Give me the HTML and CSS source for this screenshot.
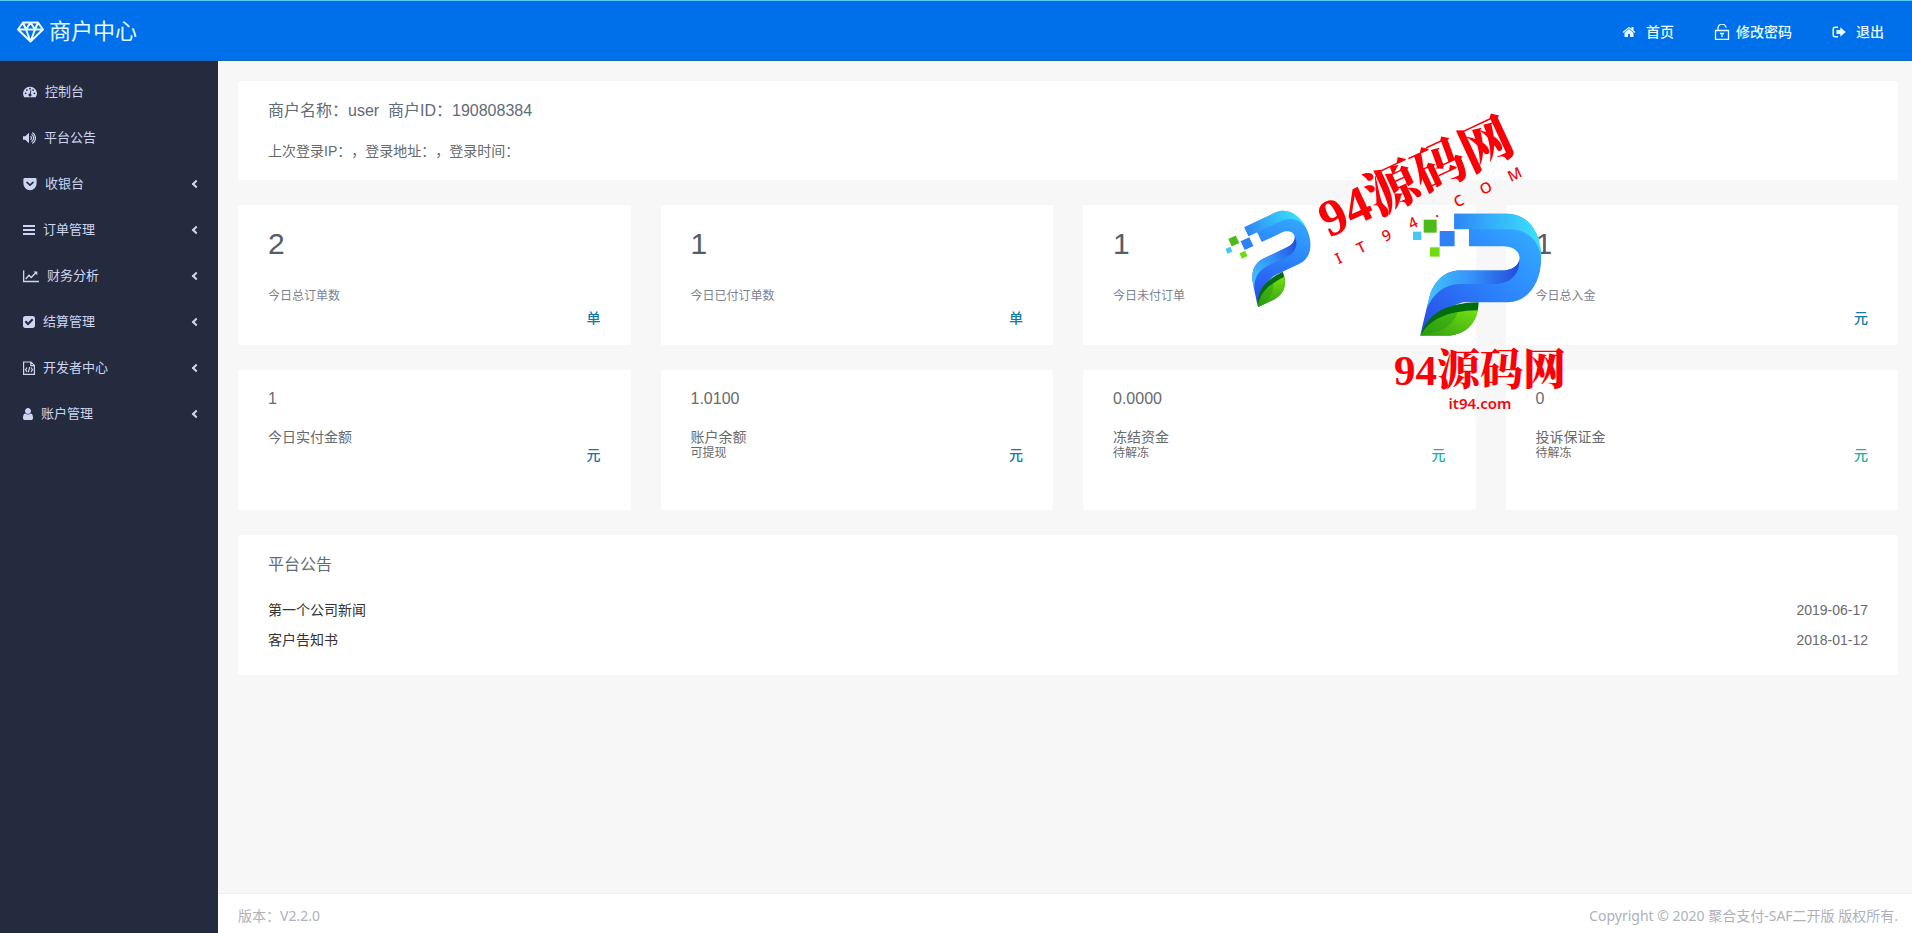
FILE: index.html
```html
<!DOCTYPE html>
<html lang="zh-CN">
<head>
<meta charset="utf-8">
<title>商户中心</title>
<link rel="stylesheet" href="styles.css">
</head>
<body>
<header class="topbar">
  <a class="brand" href="#">
    <svg class="brand-icon" viewBox="0 0 27 22" fill="none" stroke="currentColor" stroke-width="2" stroke-linejoin="round"><path d="M6 1.500h15l5 7L13.500 20.500 1 8.500zM1 8.500h25M9 8.500l4.500 12 4.500-12M6 1.500l3 7 4.500-7 4.500 7 3-7"/></svg>
    <span>商户中心</span>
  </a>
  <nav class="toplinks">
    <a class="toplink" href="#"><svg class="i14" viewBox="0 0 1792 1792" fill="currentColor"><path d="M1472 992v480q0 26-19 45t-45 19h-384v-384h-256v384h-384q-26 0-45-19t-19-45v-480q0-1 .5-3t.5-3l575-474 575 474q1 2 1 6zm223-69l-62 74q-8 9-21 11h-3q-13 0-21-7l-692-577-692 577q-12 8-24 7-13-2-21-11l-62-74q-8-10-7-23.500t11-21.500l719-599q32-26 76-26t76 26l244 204v-195q0-14 9-23t23-9h192q14 0 23 9t9 23v408l219 182q10 8 11 21.500t-7 23.500z"/></svg><span>首页</span></a>
    <a class="toplink toplink-tight" href="#"><svg class="i16" viewBox="0 0 16 16" fill="none" stroke="currentColor" stroke-width="1.300"><path d="M1.500 6.500h13v9h-13zM4 6.500V4.500a4 4 0 0 1 8-.8M6 9.500h4M8 9.500v3.500"/></svg><span>修改密码</span></a>
    <a class="toplink" href="#"><svg class="i14" viewBox="0 0 14 14"><path d="M6 2.200H3.200Q1.200 2.200 1.200 4.200v5.600q0 2 2 2H6" fill="none" stroke="currentColor" stroke-width="1.500"/><path d="M8.300 2.300 13.800 7l-5.500 4.700V9H4.500V5h3.800z" fill="currentColor"/></svg><span>退出</span></a>
  </nav>
</header>
<div class="shell">
  <nav class="sidebar">
    <a class="item" href="#"><svg class="i14" viewBox="0 0 14 14"><path d="M7 1.700a6.800 6.800 0 0 0-5.800 10.500h11.600A6.800 6.800 0 0 0 7 1.700z" fill="currentColor"/><g fill="#252b3f"><circle cx="2.600" cy="8.300" r=".9"/><circle cx="3.900" cy="5.100" r=".9"/><circle cx="7" cy="3.700" r=".9"/><circle cx="10.100" cy="5.100" r=".9"/><circle cx="11.400" cy="8.300" r=".9"/><path d="M7.600 5.300l.8.200-.6 3.200a1.500 1.500 0 1 1-.9-.2z"/></g></svg><span>控制台</span></a>
    <a class="item" href="#"><svg class="i13" viewBox="0 0 13 14"><path d="M0 5.200h2.300L6 1.800v10.400L2.300 8.800H0z" fill="currentColor"/><path d="M7.500 5.200a2.200 2.200 0 0 1 0 3.600M8.500 3.300a4.300 4.300 0 0 1 0 7.400M9.300 1.600a6.200 6.200 0 0 1 0 10.800" fill="none" stroke="currentColor" stroke-width="1.200"/></svg><span>平台公告</span></a>
    <a class="item" href="#"><svg class="i14" viewBox="0 0 14 14"><path d="M1.500 1h11Q13.600 1 13.600 2.200V6.600a6.600 6.600 0 0 1-13.200 0V2.200Q.4 1 1.500 1z" fill="currentColor"/><path d="M4 5.300l3 2.900 3-2.900" fill="none" stroke="#252b3f" stroke-width="1.600" stroke-linecap="round" stroke-linejoin="round"/></svg><span>收银台</span><i class="chev"></i></a>
    <a class="item" href="#"><svg class="i12" viewBox="0 0 12 14" fill="currentColor"><path d="M0 2h12v2H0zM0 6h12v2H0zM0 10h12v2H0z"/></svg><span>订单管理</span><i class="chev"></i></a>
    <a class="item" href="#"><svg class="i16" viewBox="0 0 16 14"><path d="M.6 1.500v11H16M2.700 10l3.300-3.800 2.200 2.200 4.600-4.700" fill="none" stroke="currentColor" stroke-width="1.400"/><path d="M10.500 2.500h3.800v3.800z" fill="currentColor"/></svg><span>财务分析</span><i class="chev"></i></a>
    <a class="item" href="#"><svg class="i12" viewBox="128 0 1536 1792" fill="currentColor"><path d="M813 1299l614-614q19-19 19-45t-19-45l-102-102q-19-19-45-19t-45 19l-467 467-211-211q-19-19-45-19t-45 19l-102 102q-19 19-19 45t19 45l358 358q19 19 45 19t45-19zm851-883v960q0 119-84.500 203.500t-203.500 84.500h-960q-119 0-203.500-84.500t-84.500-203.500v-960q0-119 84.500-203.500t203.500-84.500h960q119 0 203.500 84.500t84.500 203.500z"/></svg><span>结算管理</span><i class="chev"></i></a>
    <a class="item" href="#"><svg class="i12" viewBox="0 0 12 14" fill="none" stroke="currentColor" stroke-width="1.200"><path d="M.6 1h7.400l3.400 3.400V13.400H.6zM7.800 1v3.600h3.600M4 6.500L2.500 8.700 4 11M8 6.500l1.500 2.200L8 11M6.600 6.200l-1.200 5"/></svg><span>开发者中心</span><i class="chev"></i></a>
    <a class="item" href="#"><svg class="i10" viewBox="256 0 1280 1792" fill="currentColor"><path d="M1536 1399q0 109-62.500 187t-150.500 78h-854q-88 0-150.500-78t-62.500-187q0-85 8.500-160.500t31.500-152 58.500-131 94-89 134.500-34.500q131 128 313 128t313-128q76 0 134.500 34.500t94 89 58.500 131 31.500 152 8.500 160.500zm-256-887q0 159-112.500 271.500t-271.500 112.500-271.500-112.500-112.500-271.500 112.500-271.500 271.500-112.500 271.500 112.500 112.500 271.500z"/></svg><span>账户管理</span><i class="chev"></i></a>
  </nav>
  <div class="page">
    <main class="content">
      <section class="card info">
        <h1 class="title">商户名称：user&nbsp; 商户ID：190808384</h1>
        <p class="login">上次登录IP：，登录地址：，登录时间：</p>
      </section>
      <section class="grid">
        <div class="card stat"><div class="num">2</div><div class="cap">今日总订单数</div><div class="unit">单</div></div>
        <div class="card stat"><div class="num">1</div><div class="cap">今日已付订单数</div><div class="unit">单</div></div>
        <div class="card stat"><div class="num">1</div><div class="cap">今日未付订单</div></div>
        <div class="card stat"><div class="num">1</div><div class="cap">今日总入金</div><div class="unit">元</div></div>
      </section>
      <section class="grid">
        <div class="card fund"><div class="value">1</div><div class="label">今日实付金额</div><div class="foot"><span class="sub"></span><span class="unit">元</span></div></div>
        <div class="card fund"><div class="value">1.0100</div><div class="label">账户余额</div><div class="foot"><span class="sub">可提现</span><span class="unit">元</span></div></div>
        <div class="card fund"><div class="value">0.0000</div><div class="label">冻结资金</div><div class="foot"><span class="sub">待解冻</span><span class="unit teal">元</span></div></div>
        <div class="card fund"><div class="value">0</div><div class="label">投诉保证金</div><div class="foot"><span class="sub">待解冻</span><span class="unit teal">元</span></div></div>
      </section>
      <section class="card notices">
        <h2 class="title">平台公告</h2>
        <ul class="list">
          <li class="row"><a class="news" href="#">第一个公司新闻</a><time>2019-06-17</time></li>
          <li class="row"><a class="news" href="#">客户告知书</a><time>2018-01-12</time></li>
        </ul>
      </section>
    </main>
    <footer class="footer"><span>版本：V2.2.0</span><span>Copyright © 2020 聚合支付-SAF二开版 版权所有.</span></footer>
    <svg class="stamp" viewBox="0 0 370 330">
      <defs>
        <linearGradient id="body" x1="0" y1="1" x2="1" y2="0"><stop offset="0" stop-color="#2a48e4"/><stop offset=".45" stop-color="#2b7dfb"/><stop offset="1" stop-color="#35b4ff"/></linearGradient>
        <linearGradient id="top" x1="0" y1="0" x2="1" y2="0"><stop offset="0" stop-color="#2e86f6"/><stop offset="1" stop-color="#3ae4fb"/></linearGradient>
        <linearGradient id="fold" x1="0" y1="0" x2="1" y2="0"><stop offset="0" stop-color="#42c4fb"/><stop offset=".5" stop-color="#3590f8"/><stop offset="1" stop-color="#234bdc"/></linearGradient>
        <linearGradient id="leaf" x1="0" y1="1" x2="1" y2="0"><stop offset="0" stop-color="#2f9d12"/><stop offset="1" stop-color="#74e010"/></linearGradient>
        <g id="mark">
          <path fill="#45c8f8" d="M0 56h25v25H0z"/><path fill="#4dbb17" d="M32 20h39v39H32z"/>
          <path fill="#2f80f5" d="M80 54h45v46H80z"/><path fill="#6edb10" d="M51 103h29v28H51z"/>
          <path fill="url(#body)" d="M124 2H285C345 2 385 60 385 135S345 268 285 268H150C90 285 45 320 22 368 30 330 40 290 50 250 65 200 100 173 140 173H262C300 173 320 155 320 135 320 115 300 100 270 100H168V48H124z"/>
          <path fill="url(#top)" d="M124 2H285C345 2 385 60 385 130 375 78 340 49 285 49H124z"/>
          <path fill="url(#fold)" d="M140 173H262C298 173 318 158 319 138 322 190 285 213 245 213H140C95 215 60 240 40 290L50 250C65 200 100 173 140 173z"/>
          <path fill="#006d10" d="M22 368C42 310 85 270 197 268 196 325 160 368 100 368z"/>
          <path fill="url(#leaf)" d="M22 368C50 320 100 294 194 292 186 340 150 368 100 368z"/>
          <path fill="#219a12" opacity=".45" d="M22 368C45 330 80 306 134 298 120 340 80 360 22 368z"/>
        </g>
      </defs>
      <use href="#mark" transform="translate(48 207) rotate(-25.300) scale(.213) translate(-22 -368)"/>
      <use href="#mark" transform="translate(203 113) scale(.333)"/>
      <g transform="translate(119 138) rotate(-25)"><text class="site" font-size="52" x="0" y="0">94源码网</text></g>
      <g transform="translate(131 163) rotate(-25.500)"><text class="domain" font-size="15" font-weight="500" text-anchor="middle" x="0 25 53 82 107 133 163 195" y="0">IT94.COM</text></g>
      <text class="site" font-size="43" x="184" y="285">94源码网</text>
      <text class="domain" font-size="15" font-weight="600" text-anchor="middle" x="270" y="309">it94.com</text>
    </svg>
  </div>
</div>
</body>
</html>
```

FILE: styles.css
```css
* { box-sizing: border-box; margin: 0; padding: 0; }
body {
  min-height: 100vh;
  display: flex;
  flex-direction: column;
  background: #f7f7f7;
  color: #676a6c;
  font: 14px/18px "Liberation Sans", "Noto Sans CJK SC", sans-serif;
  text-spacing-trim: space-all;
}
a { color: inherit; text-decoration: none; }
svg { display: block; flex: none; }

.topbar {
  height: 61px;
  display: flex;
  align-items: center;
  justify-content: space-between;
  padding: 2px 28px 0 17px;
  background: #0070ea;
  border-top: 1px solid #5cc8f4;
  border-bottom: 1px solid #1567bd;
  color: #e6faff;
}
.brand { display: flex; align-items: center; gap: 5px; font-size: 22px; line-height: 30px; }
.brand-icon { width: 27px; height: 22px; }
.toplinks { display: flex; align-items: center; gap: 40px; font-weight: 500; }
.toplink { display: flex; align-items: center; gap: 10px; }
.toplink-tight { gap: 6px; }

.i10 { width: 10px; height: 14px; }
.i12 { width: 12px; height: 14px; }
.i13 { width: 13px; height: 14px; }
.i14 { width: 14px; height: 14px; }
.i16 { width: 16px; height: 16px; }

.shell { flex: 1; display: flex; }
.sidebar { width: 218px; flex: none; padding-top: 8px; background: #252b3f; color: #cdd5f0; font-size: 13px; }
.item { height: 46px; display: flex; align-items: center; gap: 8px; padding: 0 19px 0 23px; }
.chev {
  width: 6px;
  height: 6px;
  margin-left: auto;
  border-left: 2px solid currentColor;
  border-bottom: 2px solid currentColor;
  transform: rotate(45deg);
}

.page { flex: 1; min-width: 0; display: flex; flex-direction: column; position: relative; }
.content { flex: 1; display: flex; flex-direction: column; gap: 25px; padding: 20px 14px 20px 20px; }
.card { background: #fff; border-radius: 2px; padding: 20px 30px 16px; }
.title { font-size: 16px; line-height: 20px; font-weight: 400; color: #5f6b78; }
.login { margin-top: 21px; }
.info { padding-bottom: 20px; }

.grid { display: grid; grid-template-columns: repeat(4, 1fr); gap: 30px; }
.stat, .fund, .notices { min-height: 140px; }
.stat { padding-top: 24px; }
.num { font-size: 30px; line-height: 30px; color: #565d68; }
.cap { margin-top: 28px; font-size: 12px; color: #7a8290; }
.unit { font-size: 14px; font-weight: 500; color: #1277ab; text-align: right; }
.stat .unit { margin-top: 4px; }
.value { font-size: 16px; }
.label { margin-top: 20px; }
.foot { display: flex; justify-content: space-between; }
.sub { font-size: 12px; line-height: 14px; }
.teal { color: #23b0a0; }

.list { list-style: none; margin-top: 20px; }
.row { display: flex; justify-content: space-between; line-height: 30px; }
.news { color: #333; }

.footer {
  height: 40px;
  display: flex;
  align-items: center;
  justify-content: space-between;
  padding: 4px 14px 0 20px;
  background: #fff;
  border-top: 1px solid #eee;
  color: #aeb1bb;
  font-family: "Noto Sans", "Noto Sans CJK SC", sans-serif;
}

.stamp { position: absolute; top: 39px; right: 332px; width: 370px; height: 330px; pointer-events: none; }
.site { fill: #fb0007; font-family: "Liberation Serif", "Noto Serif CJK SC", "Noto Sans CJK SC", serif; font-weight: 900; }
.domain { fill: #f5060c; font-family: "Noto Sans", sans-serif; }
```
